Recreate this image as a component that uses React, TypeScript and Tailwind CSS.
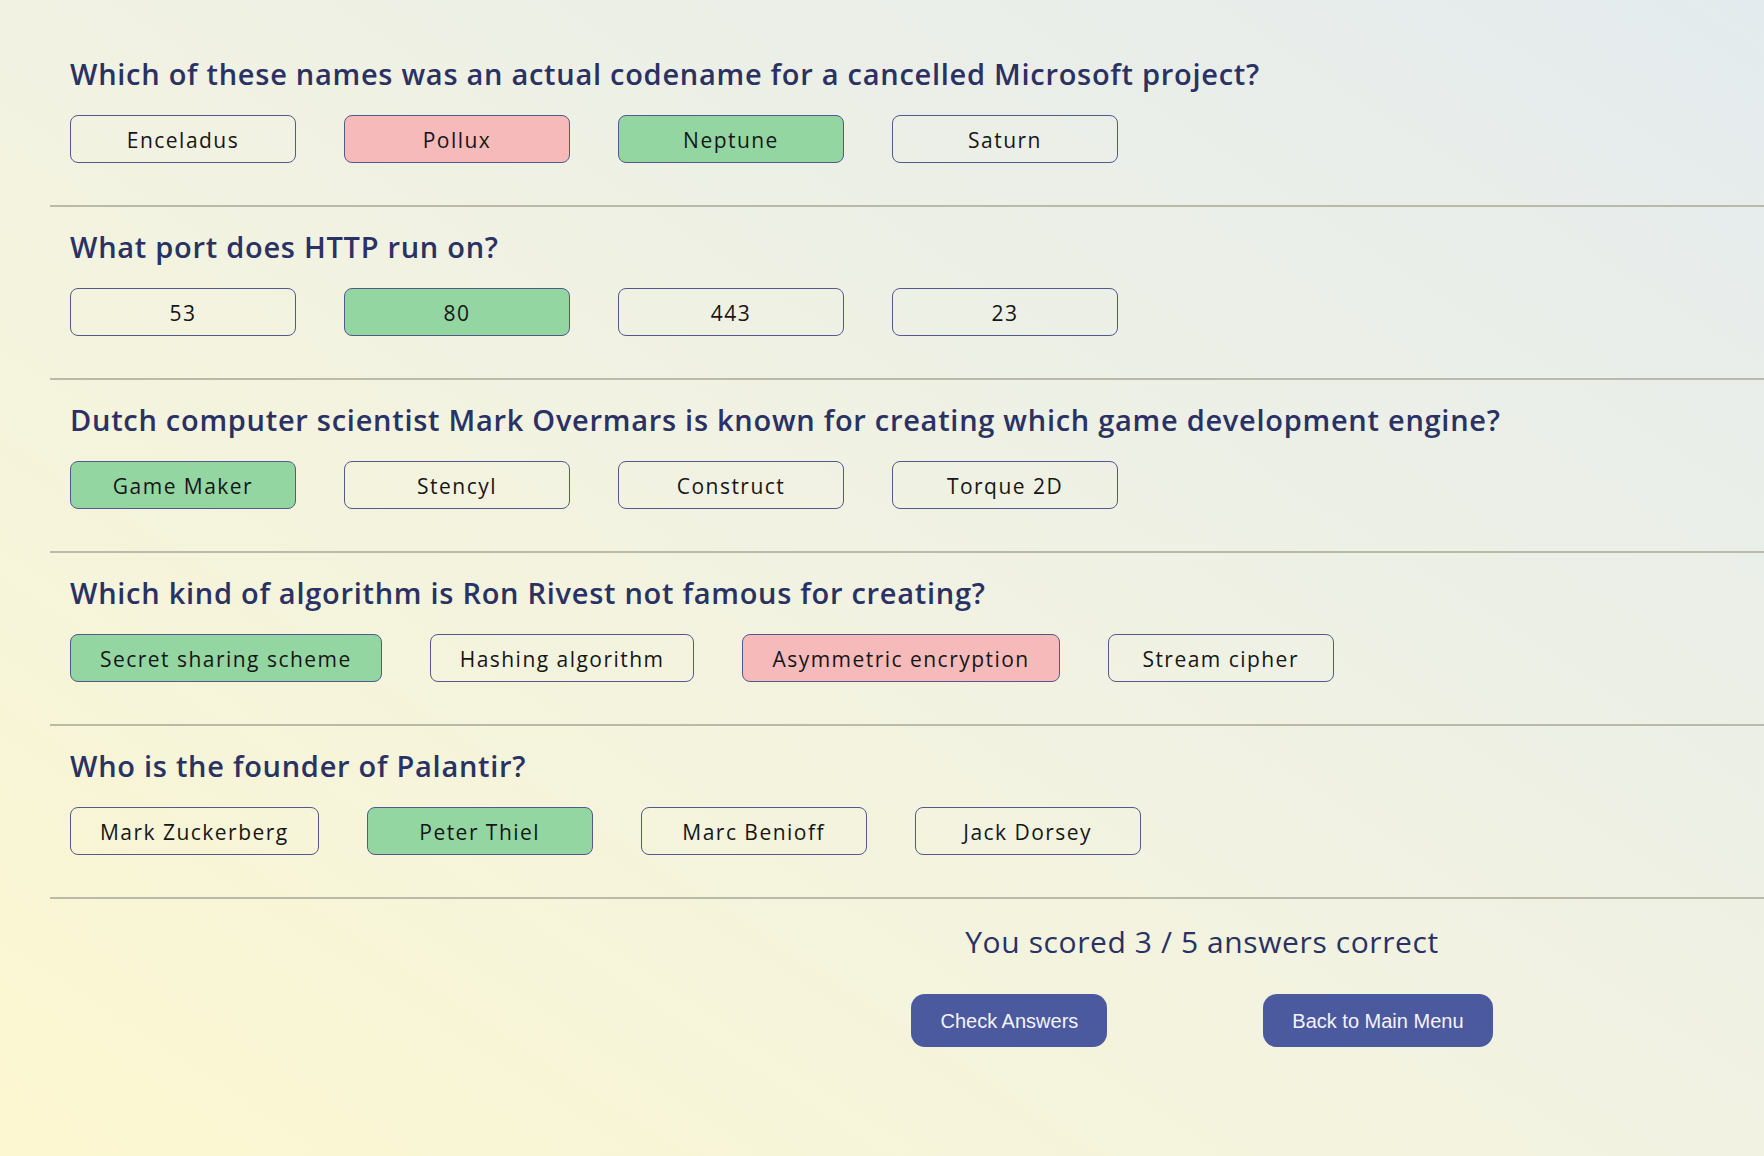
const questions = [
  {
    q: "Which of these names was an actual codename for a cancelled Microsoft project?",
    answers: ["Enceladus", "Pollux", "Neptune", "Saturn"],
    correct: 2,
    picked: 1
  },
  {
    q: "What port does HTTP run on?",
    answers: ["53", "80", "443", "23"],
    correct: 1,
    picked: 1
  },
  {
    q: "Dutch computer scientist Mark Overmars is known for creating which game development engine?",
    answers: ["Game Maker", "Stencyl", "Construct", "Torque 2D"],
    correct: 0,
    picked: 0
  },
  {
    q: "Which kind of algorithm is Ron Rivest not famous for creating?",
    answers: ["Secret sharing scheme", "Hashing algorithm", "Asymmetric encryption", "Stream cipher"],
    correct: 0,
    picked: 2
  },
  {
    q: "Who is the founder of Palantir?",
    answers: ["Mark Zuckerberg", "Peter Thiel", "Marc Benioff", "Jack Dorsey"],
    correct: 1,
    picked: 1
  }
];

function answerClass(i: number, correct: number, picked: number) {
  if (i === correct) return "bg-[#93d6a1]";
  if (i === picked) return "bg-[#f6baba]";
  return "bg-transparent";
}

export default function App() {
  return (
    <div className="min-h-screen w-full bg-linear-to-tr from-[#fcf7d0] via-[#f1f2e2] to-[#e4ebee] pt-[34px] font-['Open_Sans',sans-serif]">
      <div className="ml-[50px]">
        {questions.map((item) => (
          <section key={item.q} className="border-b-2 border-[#b9baa8] pb-[42px] pl-[20px] pt-[22px]">
            <h2 className="h-[36px] text-[29px] font-semibold leading-[36px] tracking-[0.025em] text-[#2a3163]">{item.q}</h2>
            <div className="mt-[23px] flex gap-[48px]">
              {item.answers.map((a, i) => (
                <button
                  key={a}
                  className={`h-[48px] min-w-[226px] rounded-[8px] border border-[#525a8c] px-[29px] pt-[3px] text-[21px] tracking-[0.07em] text-[#161616] ${answerClass(i, item.correct, item.picked)}`}
                >
                  {a}
                </button>
              ))}
            </div>
          </section>
        ))}
      </div>

      <div className="flex justify-end pb-[108px] pt-[24px]">
        <div className="flex w-[1124px] flex-col items-center">
          <p className="h-[38px] text-[30px] font-medium leading-[38px] tracking-[0.02em] text-[#2a3163]">You scored 3 / 5 answers correct</p>
          <div className="mt-[33px] flex gap-[156px]">
            <button className="h-[53px] rounded-[14px] bg-[#4b599e] px-[29px] font-['Liberation_Sans',Arial,sans-serif] text-[20px] text-[#f3f4ff]">
              Check Answers
            </button>
            <button className="h-[53px] rounded-[14px] bg-[#4b599e] px-[29px] font-['Liberation_Sans',Arial,sans-serif] text-[20px] text-[#f3f4ff]">
              Back to Main Menu
            </button>
          </div>
        </div>
      </div>
    </div>
  );
}
